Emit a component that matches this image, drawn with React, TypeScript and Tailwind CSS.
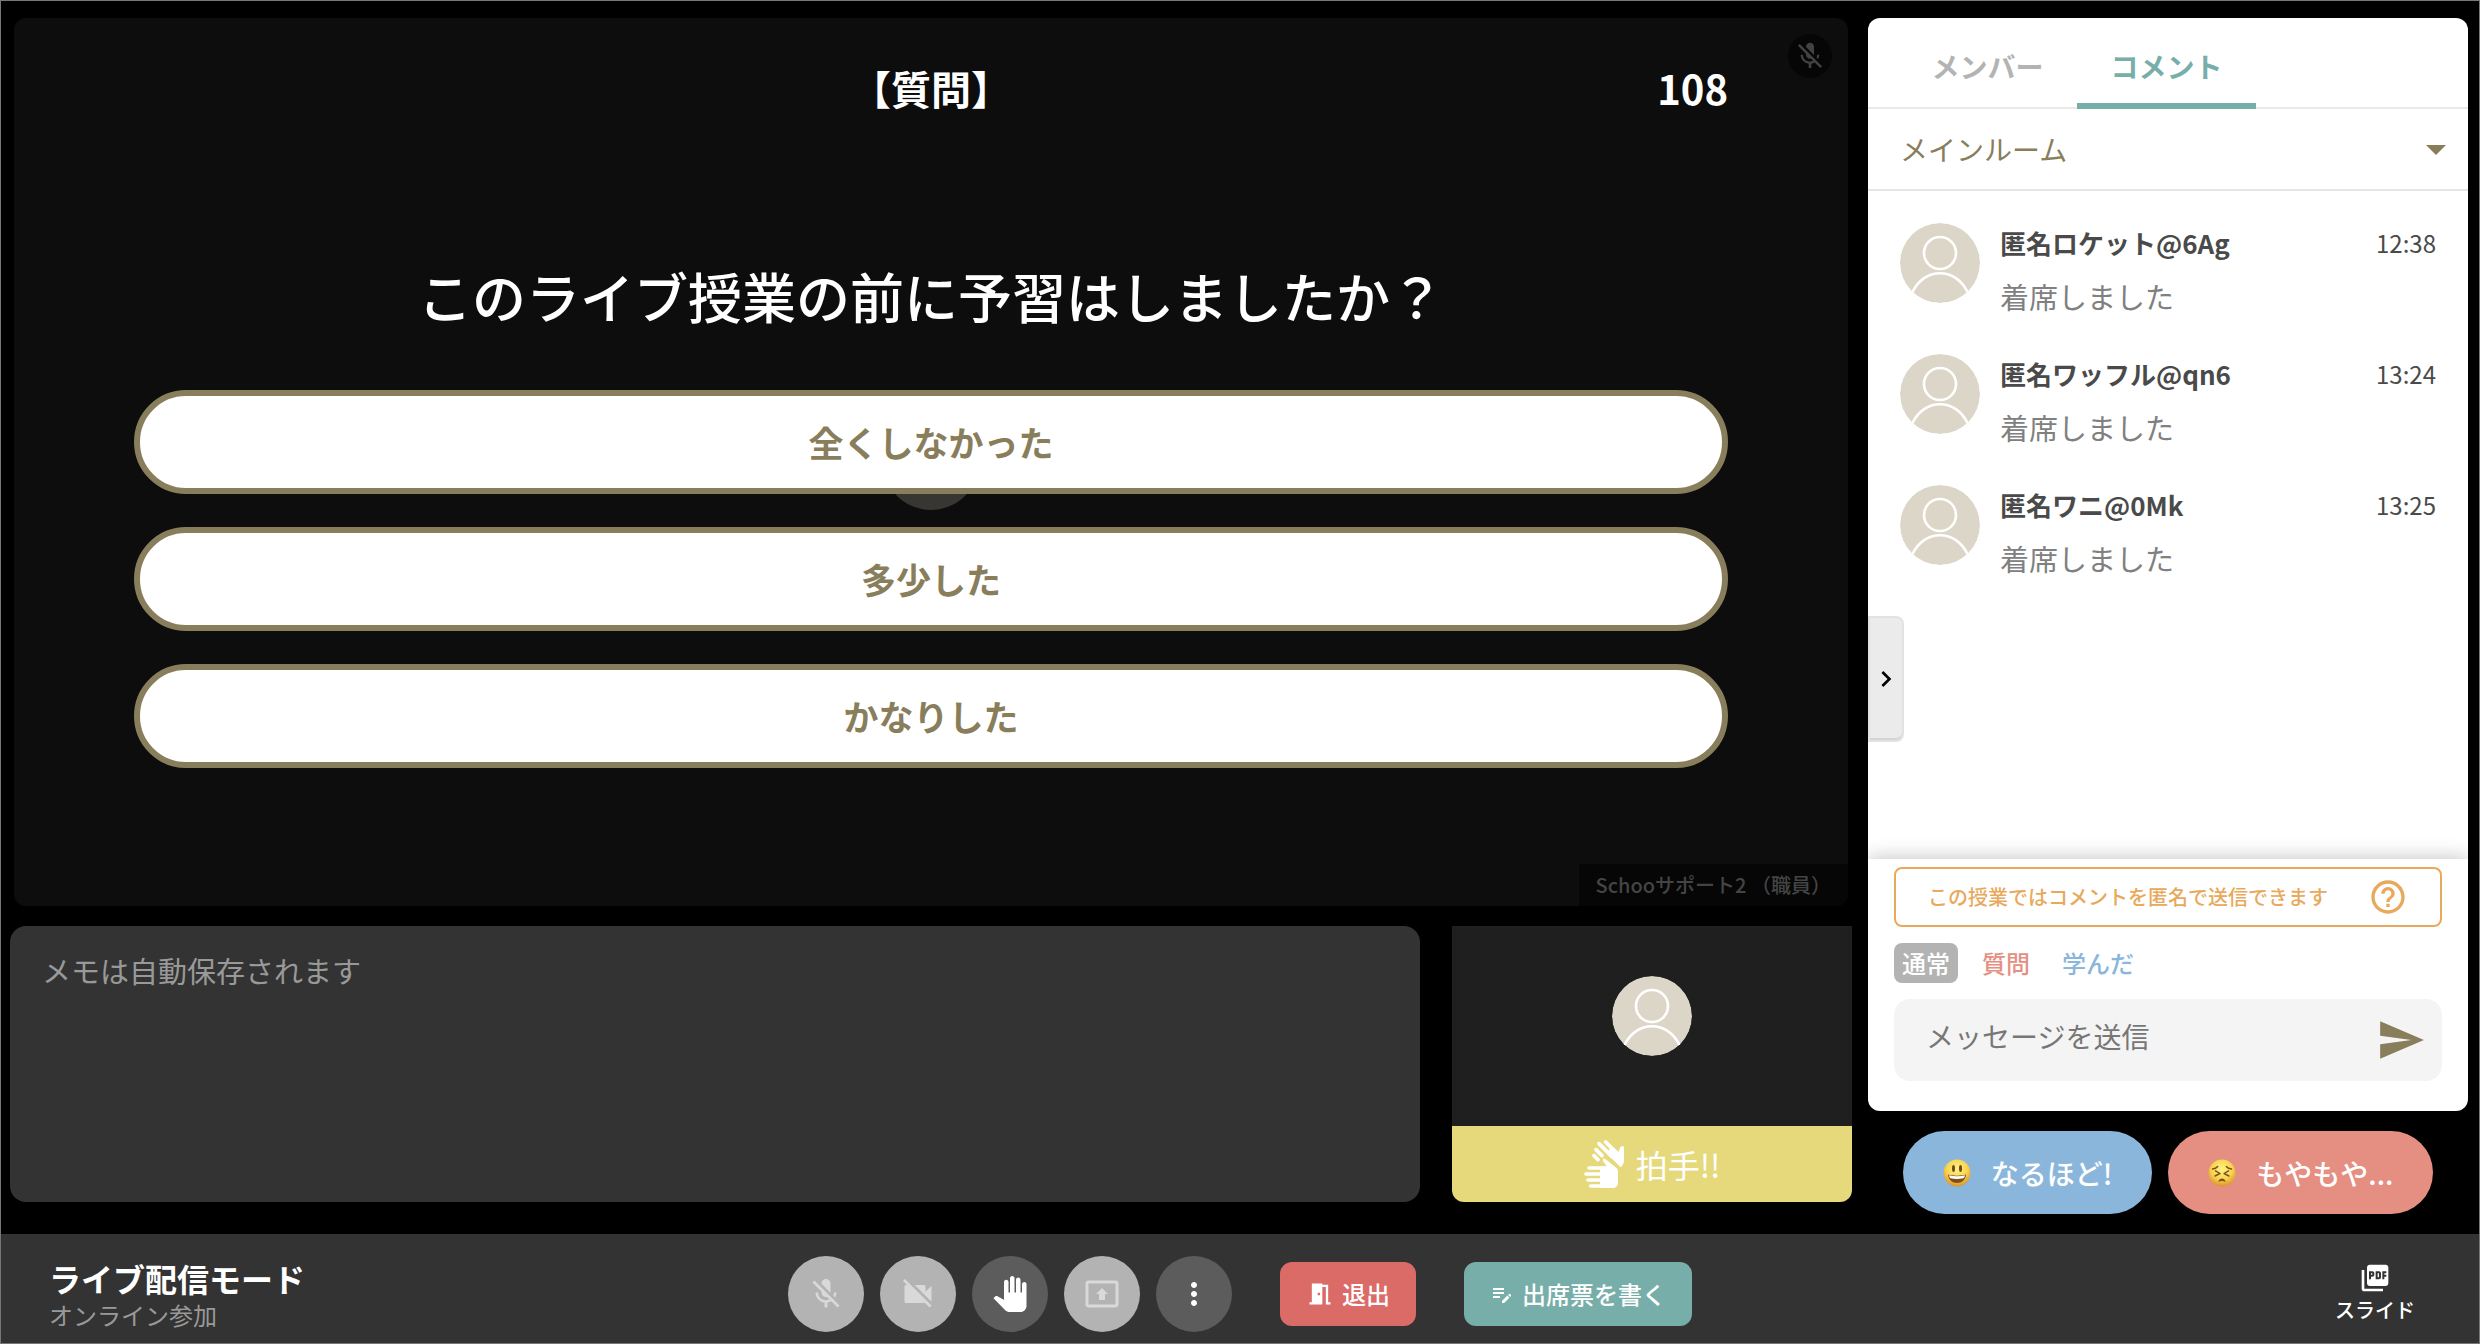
import { useState } from "react";
import type { ReactNode } from "react";
import {
  MdArrowDropDown,
  MdChevronRight,
  MdEditNote,
  MdHelpOutline,
  MdMeetingRoom,
  MdMicOff,
  MdMoreVert,
  MdPanTool,
  MdPictureAsPdf,
  MdPresentToAll,
  MdSend,
  MdVideocamOff,
} from "react-icons/md";

interface Comment {
  name: string;
  time: string;
  body: string;
}

const comments: Comment[] = [
  { name: "匿名ロケット@6Ag", time: "12:38", body: "着席しました" },
  { name: "匿名ワッフル@qn6", time: "13:24", body: "着席しました" },
  { name: "匿名ワニ@0Mk", time: "13:25", body: "着席しました" },
];

const answers = ["全くしなかった", "多少した", "かなりした"];

const Avatar = () => (
  <svg viewBox="0 0 80 80" className="size-20 shrink-0" aria-hidden="true">
    <defs>
      <clipPath id="avatar-clip">
        <circle cx="40" cy="40" r="40" />
      </clipPath>
    </defs>
    <g clipPath="url(#avatar-clip)">
      <circle cx="40" cy="40" r="40" fill="#dcd6c8" />
      <g fill="none" stroke="#fff" strokeWidth="2.6">
        <circle cx="40" cy="30" r="16" />
        <path d="M12.5 69C18 57.5 28 50.3 40 50.3S62 57.5 67.5 69" />
      </g>
    </g>
  </svg>
);

// 拍手アイコン：奥の手（右上）と手前の手（左下）
const ClapIcon = () => (
  <svg viewBox="0 0 120 144" className="h-12 w-10 shrink-0" fill="#fff" aria-hidden="true">
    <g stroke="#fff" strokeWidth="11" strokeLinecap="round">
      <path d="M65 6L98 39" />
      <path d="M45 11L84 50" />
      <path d="M36 29L54 47" />
      <path d="M30 47L42 59" />
      <path d="M15 84H60" />
      <path d="M6 102H60" />
      <path d="M12 120H60" />
      <path d="M20 138H60" />
    </g>
    <path d="M77 12L104 36L108 23C110 19 116 18 120 20V60C120 68 117 76 110 82L66 38L76 30Z" />
    <path d="M48 79H68L57 63C55 57 59 54 64 57L95 82C100 86 102 90 102 96V126C102 138 96 144 84 144H48Z" />
  </svg>
);

const HappyFace = () => (
  <svg viewBox="0 0 28 28" className="size-7 shrink-0" aria-hidden="true">
    <defs>
      <radialGradient id="face-fill" cx="0.5" cy="0.35" r="0.65">
        <stop offset="0" stopColor="#fff285" />
        <stop offset="0.6" stopColor="#f9d24e" />
        <stop offset="1" stopColor="#d8952c" />
      </radialGradient>
    </defs>
    <circle cx="14" cy="14" r="13.5" fill="url(#face-fill)" />
    <ellipse cx="10.5" cy="9.5" rx="1.5" ry="3.4" fill="#6b4a14" />
    <ellipse cx="17.5" cy="9.5" rx="1.5" ry="3.4" fill="#6b4a14" />
    <path d="M5 15.5C10 17 18 17 23 15.5C22.500 21 19 24 14 24S5.5 21 5 15.5Z" fill="#80501c" />
    <path d="M6 16.2C11 17.5 17 17.5 22 16.2C21.600 18.2 21 19 20.5 19.3C16 20.2 12 20.2 7.5 19.3C6.8 18.8 6.3 17.8 6 16.2Z" fill="#fff" />
  </svg>
);

const TroubledFace = () => (
  <svg viewBox="0 0 28 28" className="size-7 shrink-0" aria-hidden="true">
    <circle cx="14" cy="14" r="13.5" fill="url(#face-fill)" />
    <g fill="none" stroke="#7a521a" strokeWidth="1.4" strokeLinecap="round" strokeLinejoin="round">
      <path d="M4.500 10C6.500 9.900 8.500 9 9.700 7.500" />
      <path d="M23.500 10C21.500 9.900 19.500 9 18.300 7.500" />
      <path d="M7.500 11.800L12 14.500L7 17" />
      <path d="M20.500 11.800L16 14.500L21 17" />
    </g>
    <path d="M10.300 23C11 20.500 12.500 19.600 14 19.600S17 20.500 17.700 23C15.500 21.800 12.500 21.800 10.300 23Z" fill="#7a521a" />
  </svg>
);

interface RoundButtonProps {
  label: string;
  disabled?: boolean;
  children: ReactNode;
}

const RoundButton = ({ label, disabled = false, children }: RoundButtonProps) => (
  <button
    type="button"
    aria-label={label}
    disabled={disabled}
    className="flex size-[76px] items-center justify-center rounded-full bg-[#5c5c5c] text-4xl text-white disabled:bg-[#b3b3b3] disabled:text-[#d9d9d9]"
  >
    {children}
  </button>
);

const Stage = () => (
  <section className="relative mx-1 flex flex-1 flex-col overflow-hidden rounded-xl bg-[#0d0d0d] px-[120px] text-white">
    {/* 講師のアバター（アンケートの裏） */}
    <div className="absolute inset-0 flex items-center justify-center">
      <div className="size-24 rounded-full bg-[#383632]" />
    </div>
    <div className="absolute top-4 right-4 flex size-11 items-center justify-center rounded-full bg-[#060606] text-[32px] text-[#424242]">
      <MdMicOff />
    </div>
    <div className="absolute right-0 bottom-0 flex h-[42px] items-center bg-[#060606] px-[17px] text-xl font-medium text-[#444444]">
      Schooサポート2 （職員）
    </div>

    <div className="relative grid grid-cols-[1fr_auto_1fr] items-center pt-[38px] text-[40px] leading-[64px] font-bold">
      <span />
      <h1>【質問】</h1>
      <span className="text-right">108</span>
    </div>
    <h2 className="relative mt-[136px] text-center text-[54px] leading-[80px] font-medium">
      このライブ授業の前に予習はしましたか？
    </h2>
    <div className="relative mt-[54px] flex flex-col gap-[33px]">
      {answers.map((answer) => (
        <button
          key={answer}
          type="button"
          className="h-[104px] rounded-full border-6 border-[#897e5b] bg-white text-[35px] font-bold text-[#897e5b]"
        >
          {answer}
        </button>
      ))}
    </div>
  </section>
);

const MemoRow = () => (
  <div className="flex h-[276px] gap-8">
    <textarea
      aria-label="メモ"
      placeholder="メモは自動保存されます"
      className="flex-1 resize-none rounded-2xl bg-[#333333] px-8 py-6 text-[29px] leading-10 text-white outline-none placeholder:text-[#999999]"
    />
    <div className="flex w-[400px] flex-col">
      <div className="flex flex-1 items-center justify-center bg-[#1f1f1f] pb-5">
        <Avatar />
      </div>
      <button
        type="button"
        className="flex h-[76px] items-center justify-center gap-3 rounded-b-xl bg-[#e6d97b] text-[32px] text-white"
      >
        <ClapIcon />
        拍手!!
      </button>
    </div>
  </div>
);

const CommentItem = ({ name, time, body }: Comment) => (
  <li className="flex gap-5">
    <Avatar />
    <div className="flex-1">
      <div className="flex items-center justify-between leading-10">
        <span className="text-[26px] font-bold text-[#4a4a4a]">{name}</span>
        <time className="text-2xl text-[#4a4a4a]">{time}</time>
      </div>
      <p className="mt-2.5 text-[29px] leading-[46px] text-[#808080]">{body}</p>
    </div>
  </li>
);

const CommentForm = () => {
  const [message, setMessage] = useState("");

  return (
    <form
      className="px-[26px] pt-2 pb-[30px] shadow-[0_-4px_16px_rgba(0,0,0,0.18)]"
      onSubmit={(e) => e.preventDefault()}
    >
      <div className="flex h-[60px] items-center justify-between rounded-lg border-2 border-[#e8a95c] px-8 text-xl font-medium text-[#e8a95c]">
        この授業ではコメントを匿名で送信できます
        <button type="button" aria-label="ヘルプ" className="text-[40px]">
          <MdHelpOutline />
        </button>
      </div>
      <div className="mt-4 flex gap-4 text-2xl leading-10 font-medium">
        <button type="button" className="rounded-lg bg-[#b3b3b3] px-2 text-white">
          通常
        </button>
        <button type="button" className="px-2 text-[#e48f82]">
          質問
        </button>
        <button type="button" className="px-2 text-[#8bb6dc]">
          学んだ
        </button>
      </div>
      <div className="mt-4 flex h-[82px] items-center rounded-2xl bg-[#f4f4f4]">
        <input
          type="text"
          aria-label="メッセージ"
          placeholder="メッセージを送信"
          value={message}
          onChange={(e) => setMessage(e.target.value)}
          className="h-20 min-w-0 flex-1 bg-transparent pb-2 pl-8 text-[28px] text-[#4a4a4a] outline-none placeholder:text-[#777777]"
        />
        <button type="submit" aria-label="送信" className="px-4 text-[50px] text-[#897e5b]">
          <MdSend />
        </button>
      </div>
    </form>
  );
};

const SidePanel = () => (
  <aside className="flex w-[600px] flex-col gap-5">
    <div className="relative flex flex-1 flex-col overflow-hidden rounded-xl bg-white">
      <div role="tablist" className="flex h-[91px] border-b-2 border-[#ebebe6] px-[30px] text-[28px] font-bold">
        <button role="tab" aria-selected={false} type="button" className="w-[179px] pt-1.5 text-[#b3b3b3]">
          メンバー
        </button>
        <button
          role="tab"
          aria-selected={true}
          type="button"
          className="-mb-0.5 w-[179px] border-b-6 border-[#78aea9] pt-2.5 text-[#78aea9]"
        >
          コメント
        </button>
      </div>

      <div className="grid h-[82px] items-center border-b-2 border-[#e4e6e2] text-[#897e5b]">
        <select
          aria-label="ルーム"
          className="col-start-1 row-start-1 h-full w-full appearance-none bg-transparent px-8 text-[28px] outline-none"
        >
          <option>メインルーム</option>
        </select>
        <MdArrowDropDown className="pointer-events-none col-start-1 row-start-1 mr-2 size-12 justify-self-end" />
      </div>

      <ul className="flex flex-1 flex-col gap-[35px] px-8 pt-8">
        {comments.map((comment) => (
          <CommentItem key={comment.name} {...comment} />
        ))}
      </ul>

      <CommentForm />

      <button
        type="button"
        aria-label="パネルを閉じる"
        className="absolute top-[598px] left-0 flex h-[126px] w-9 items-center rounded-r-lg border-2 border-[#e2e2e2] bg-[#ebebeb] text-[32px] text-black shadow-[inset_0_-2px_0_#d4d4d4]"
      >
        <MdChevronRight className="shrink-0" />
      </button>
    </div>

    <div className="flex h-[83px] justify-center gap-4 text-[28px] font-medium text-white">
      <button type="button" className="flex items-center gap-5 rounded-full bg-[#8bb6dc] px-10">
        <HappyFace />
        なるほど!
      </button>
      <button type="button" className="flex items-center gap-5 rounded-full bg-[#e48f82] px-10">
        <TroubledFace />
        もやもや...
      </button>
    </div>
  </aside>
);

const ControlBar = () => (
  <footer className="grid h-[109px] grid-cols-[1fr_auto_1fr] items-center bg-[#333333] px-12 pt-2.5 text-white">
    <div>
      <p className="text-[32px] leading-[42px] font-bold">ライブ配信モード</p>
      <p className="text-2xl leading-8 text-[#999999]">オンライン参加</p>
    </div>
    <div className="flex items-center gap-12">
      <div className="flex gap-4">
        <RoundButton label="マイク" disabled>
          <MdMicOff />
        </RoundButton>
        <RoundButton label="カメラ" disabled>
          <MdVideocamOff />
        </RoundButton>
        <RoundButton label="挙手">
          <MdPanTool />
        </RoundButton>
        <RoundButton label="画面共有" disabled>
          <MdPresentToAll />
        </RoundButton>
        <RoundButton label="その他">
          <MdMoreVert />
        </RoundButton>
      </div>
      <button
        type="button"
        className="flex h-16 items-center gap-2 rounded-xl bg-[#db6b67] px-[26px] text-2xl font-medium"
      >
        <MdMeetingRoom className="size-7" />
        退出
      </button>
      <button
        type="button"
        className="flex h-16 items-center gap-2 rounded-xl bg-[#78aea9] px-[26px] text-2xl font-medium"
      >
        <MdEditNote />
        出席票を書く
      </button>
    </div>
    <button
      type="button"
      className="flex flex-col items-center justify-self-end px-4 text-xl leading-8 font-medium"
    >
      <MdPictureAsPdf className="size-8" />
      スライド
    </button>
  </footer>
);

const App = () => (
  <div
    lang="ja"
    className="flex min-h-screen flex-col border border-[#777777] bg-black font-['Noto_Sans_CJK_JP','Noto_Sans',sans-serif]"
  >
    <main className="flex flex-1 gap-4 pt-[17px] pr-[11px] pl-[9px]">
      <div className="flex min-w-0 flex-1 flex-col gap-5 pb-8">
        <Stage />
        <MemoRow />
      </div>
      <div className="flex pb-5">
        <SidePanel />
      </div>
    </main>
    <ControlBar />
  </div>
);

export default App;
